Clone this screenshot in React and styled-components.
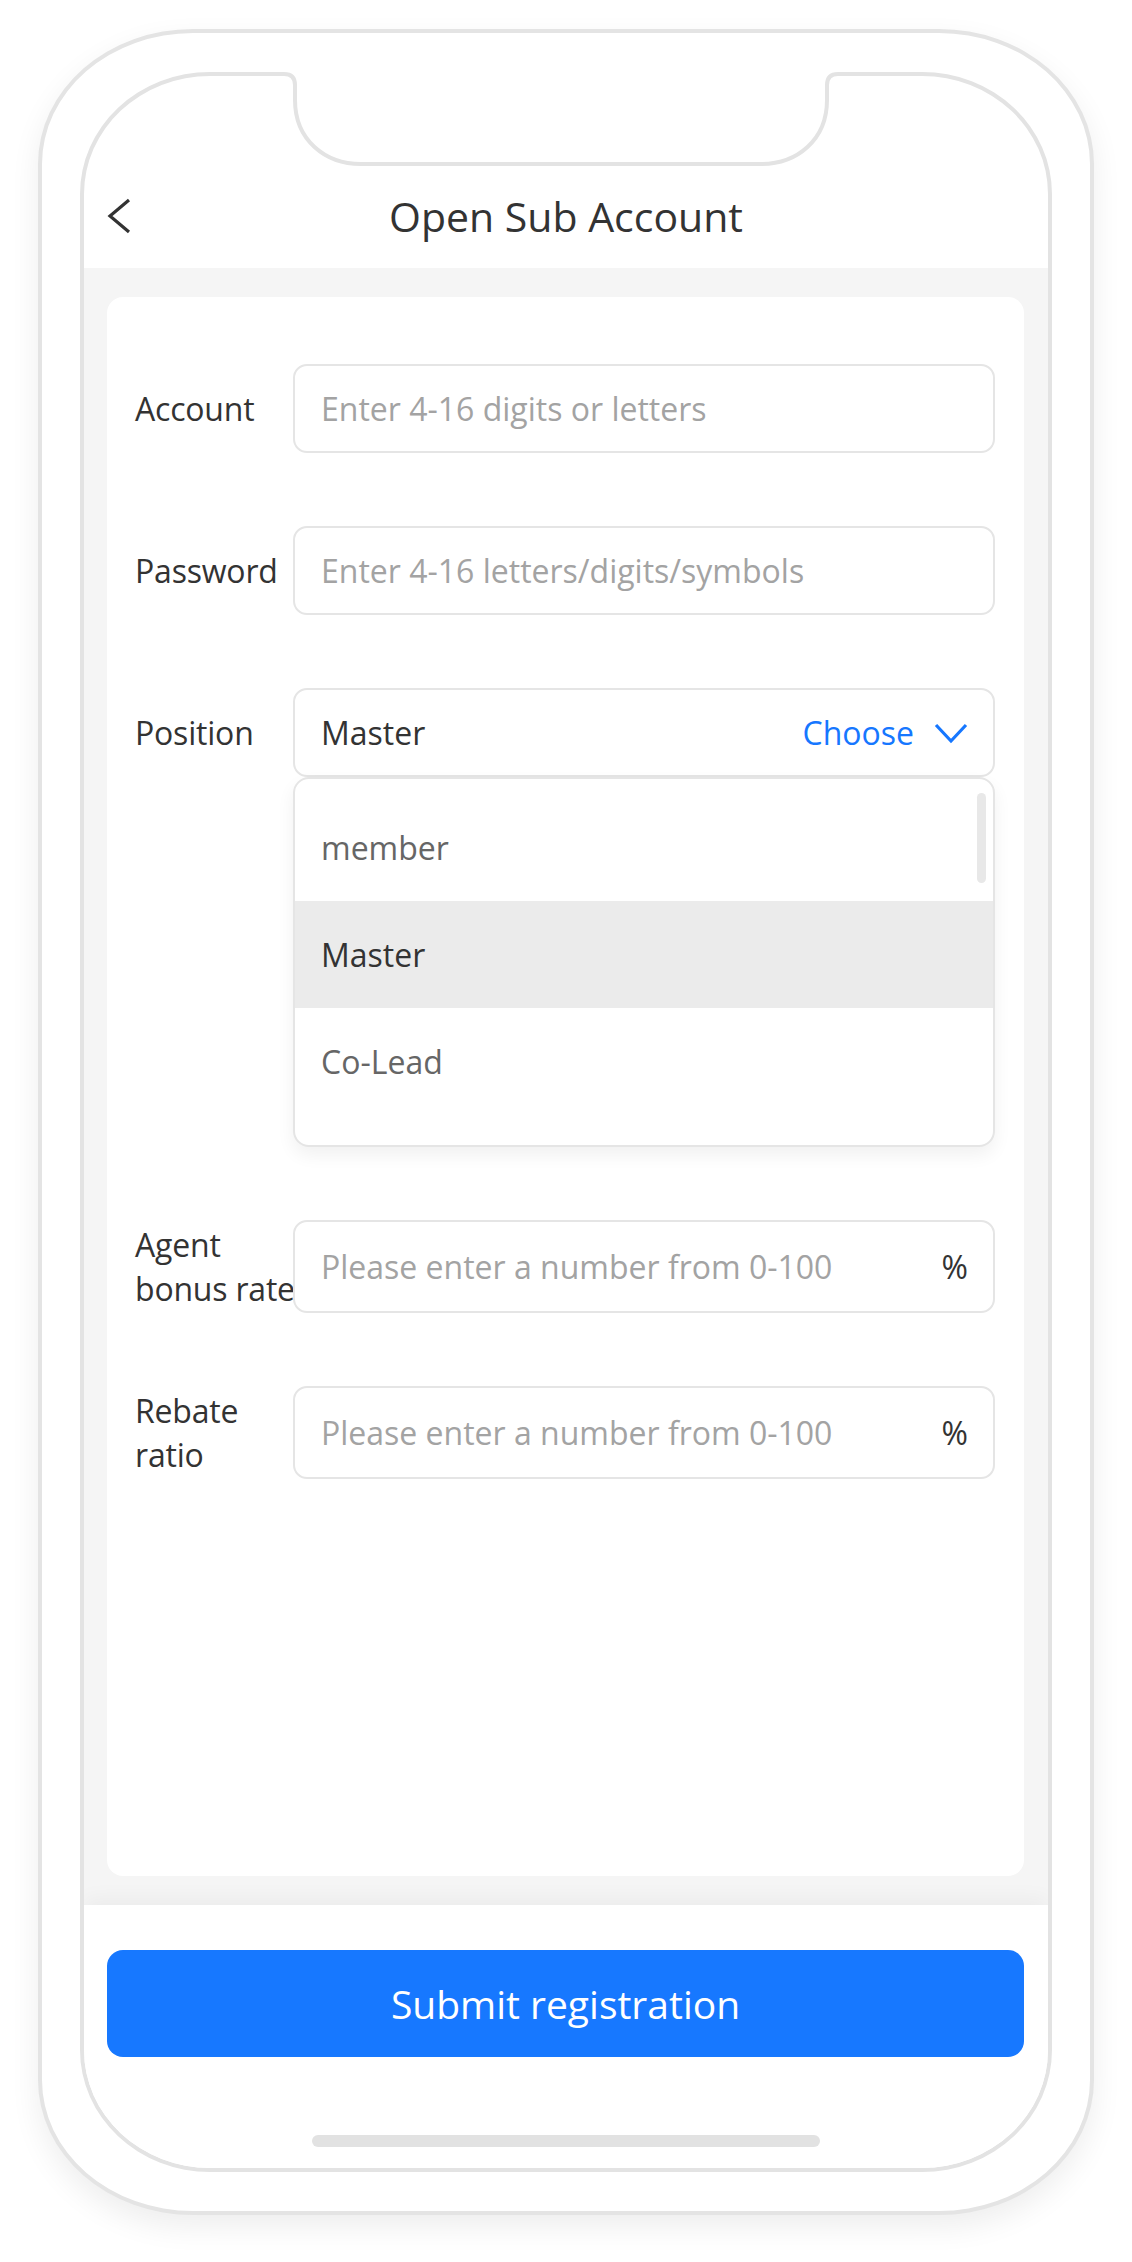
import styled, { createGlobalStyle } from "styled-components";

const GlobalStyle = createGlobalStyle`
    * {
        box-sizing: border-box;
    }
    body {
        margin: 0;
        background: #ffffff;
        font-family: "Open Sans", "Noto Sans", sans-serif;
    }
`;

const Page = styled.div`
    display: flex;
    justify-content: center;
    padding: 29px 0 47px;
`;

const Phone = styled.div`
    position: relative;
    width: 1056px;
    height: 2186px;
    padding: 39px 38px;
    border: 4px solid #e4e4e4;
    border-radius: 155px / 135px;
    background: #ffffff;
    box-shadow: 0 12px 30px rgba(0, 0, 0, 0.07);
`;

const Screen = styled.div`
    width: 100%;
    height: 100%;
    display: flex;
    flex-direction: column;
    border: 4px solid #e3e3e3;
    border-radius: 130px / 122px;
    background: #ffffff;
    overflow: hidden;
`;

const Notch = styled.svg`
    position: absolute;
    top: 39px;
    left: 228px;
`;

const Header = styled.div`
    height: 192px;
    flex-shrink: 0;
    display: grid;
    grid-template-columns: 1fr auto 1fr;
    align-items: center;
    padding: 100px 23px 12px;
`;

const BackButton = styled.button`
    justify-self: start;
    display: flex;
    padding: 0;
    border: none;
    background: none;
`;

const Title = styled.h1`
    margin: 0;
    font-size: 41px;
    font-weight: 400;
    color: #333333;
`;

const Body = styled.div`
    flex: 1;
    display: flex;
    padding: 29px 24px 29px 23px;
    background: #f5f5f5;
`;

const Card = styled.div`
    flex: 1;
    display: flex;
    flex-direction: column;
    gap: 73px;
    padding: 67px 29px 0 28px;
    border-radius: 16px;
    background: #ffffff;
`;

const Row = styled.div`
    display: flex;
    align-items: flex-start;
`;

const Label = styled.label`
    width: 158px;
    min-height: ${(p) => p.$height}px;
    flex-shrink: 0;
    display: flex;
    align-items: center;
    font-size: 32px;
    line-height: 44px;
    color: #333333;
`;

// the text may run a few pixels past its column, as "bonus rate" does
const LabelText = styled.span`
    width: 166px;
    flex-shrink: 0;
    letter-spacing: -0.2px;
`;

const Field = styled.div`
    flex: 1;
    display: flex;
    flex-direction: column;
`;

const InputBox = styled.div`
    height: ${(p) => p.$height}px;
    display: flex;
    align-items: center;
    gap: 16px;
    padding: 0 25px 0 26px;
    border: 2px solid #e5e5e5;
    border-radius: 14px;
    background: #ffffff;
    font-size: 32px;
    color: #333333;
`;

const TextInput = styled.input`
    flex: 1;
    min-width: 0;
    padding: 0;
    border: none;
    outline: none;
    background: transparent;
    font-family: inherit;
    font-size: 32px;
    color: #333333;
    &::placeholder {
        color: #a3a3a3;
    }
`;

const Value = styled.span`
    flex: 1;
`;

const Choose = styled.span`
    display: flex;
    align-items: center;
    gap: 20px;
    color: #1677ff;
`;

const Dropdown = styled.ul`
    position: relative;
    margin: 0;
    padding: 15px 0 30px;
    list-style: none;
    border: 2px solid #e5e5e5;
    border-radius: 16px;
    background: #ffffff;
    box-shadow: 0 8px 18px rgba(0, 0, 0, 0.06);
    overflow: hidden;
`;

const Option = styled.li`
    height: 107px;
    display: flex;
    align-items: center;
    padding: 0 26px;
    font-size: 32px;
    color: ${(p) => (p.$active ? "#333333" : "#666666")};
    background: ${(p) => (p.$active ? "#ebebeb" : "transparent")};
`;

const ScrollThumb = styled.span`
    position: absolute;
    top: 14px;
    right: 7px;
    width: 9px;
    height: 90px;
    border-radius: 5px;
    background: #e8e8e8;
`;

const Footer = styled.div`
    flex-shrink: 0;
    display: flex;
    flex-direction: column;
    align-items: center;
    gap: 78px;
    padding: 45px 24px 21px 23px;
    background: #ffffff;
    box-shadow: 0 -6px 20px rgba(0, 0, 0, 0.045);
`;

const SubmitButton = styled.button`
    width: 100%;
    height: 107px;
    border: none;
    border-radius: 16px;
    background: #1778ff;
    font-family: inherit;
    font-size: 39px;
    color: #ffffff;
`;

const HomeBar = styled.div`
    width: 508px;
    height: 12px;
    border-radius: 6px;
    background: #e2e2e2;
`;

const positions = [
    { id: "member", name: "member" },
    { id: "master", name: "Master", active: true },
    { id: "colead", name: "Co-Lead" },
];

function ChevronDown() {
    return (
        <svg width="34" height="22" viewBox="0 0 34 22">
            <polyline points="2,3 17,19 32,3" fill="none" stroke="#1677ff" strokeWidth="3.2" />
        </svg>
    );
}

function TextRow({ label, placeholder, type, suffix, height = 89 }) {
    return (
        <Row>
            <Label $height={height}>
                <LabelText>{label}</LabelText>
            </Label>
            <Field>
                <InputBox $height={height}>
                    <TextInput type={type} placeholder={placeholder} />
                    {suffix && <span>{suffix}</span>}
                </InputBox>
            </Field>
        </Row>
    );
}

function App() {
    return (
        <Page>
            <GlobalStyle />
            <Phone>
                <Screen>
                    <Header>
                        <BackButton>
                            <svg width="24" height="36" viewBox="0 0 24 36">
                                <polyline points="22,2 3,18 22,34" fill="none" stroke="#333" strokeWidth="3.2" />
                            </svg>
                        </BackButton>
                        <Title>Open Sub Account</Title>
                    </Header>
                    <Body>
                        <Card>
                            <TextRow label="Account" placeholder="Enter 4-16 digits or letters" />
                            <TextRow label="Password" type="password" placeholder="Enter 4-16 letters/digits/symbols" />
                            <Row>
                                <Label $height={89}>
                                    <LabelText>Position</LabelText>
                                </Label>
                                <Field>
                                    <InputBox $height={89}>
                                        <Value>Master</Value>
                                        <Choose>
                                            Choose
                                            <ChevronDown />
                                        </Choose>
                                    </InputBox>
                                    <Dropdown>
                                        {positions.map((obj) => (
                                            <Option key={obj.id} $active={obj.active}>
                                                {obj.name}
                                            </Option>
                                        ))}
                                        <ScrollThumb />
                                    </Dropdown>
                                </Field>
                            </Row>
                            <TextRow
                                label="Agent bonus rate"
                                placeholder="Please enter a number from 0-100"
                                suffix="%"
                                height={93}
                            />
                            <TextRow
                                label="Rebate ratio"
                                placeholder="Please enter a number from 0-100"
                                suffix="%"
                                height={93}
                            />
                        </Card>
                    </Body>
                    <Footer>
                        <SubmitButton>Submit registration</SubmitButton>
                        <HomeBar />
                    </Footer>
                </Screen>
                <Notch width="582" height="100" viewBox="0 0 582 100">
                    <rect x="10" y="-1" width="562" height="5" fill="#ffffff" />
                    <path
                        d="M0 2 H14 Q25 2 25 13 V28 C25 68 55 92 91 92 H491 C527 92 557 68 557 28 V13 Q557 2 568 2 H582"
                        fill="#ffffff"
                        stroke="#e3e3e3"
                        strokeWidth="4"
                    />
                </Notch>
            </Phone>
        </Page>
    );
}

export default App;
